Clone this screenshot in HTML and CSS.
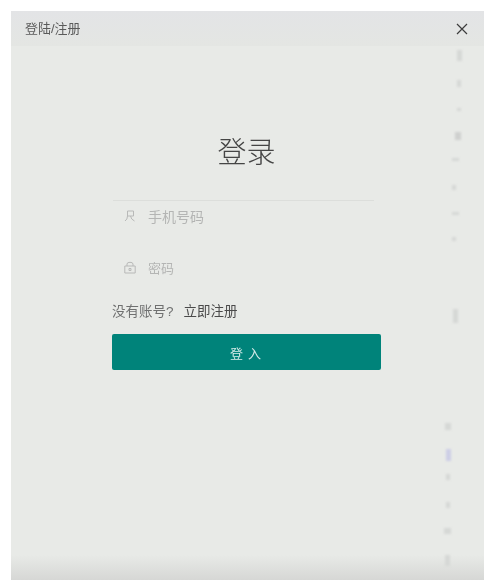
FILE: index.html
```html
<!DOCTYPE html>
<html lang="zh">
<head>
<meta charset="utf-8">
<title>登录</title>
<link rel="stylesheet" href="styles.css">
</head>
<body>
<main class="dialog">
  <header class="dialog-head">
    <span class="dialog-title">登陆/注册</span>
    <svg class="close" viewBox="0 0 12 12" aria-label="关闭"><path d="M1 1 11 11M11 1 1 11"/></svg>
  </header>
  <section class="form">
    <h1 class="heading">登录</h1>
    <div class="field field-first">
      <svg class="field-icon" viewBox="0 0 12 12"><path d="M3.5 1H9.5V6H3.5V1ZM3.5 6Q3.5 9.5 1 11M6.5 6Q7 9.5 10.5 11"/></svg>
      <span class="placeholder">手机号码</span>
    </div>
    <div class="field field-second">
      <svg class="field-icon field-icon-lock" viewBox="0 0 12 12"><path d="M3 4.5V2.5Q3 .8 6 .8T9 2.5V4.5M.8 4.5H11.2V11.5H.8ZM5 7H7V9H5Z"/></svg>
      <span class="placeholder placeholder-short">密码</span>
    </div>
    <p class="signup"><span class="signup-hint">没有账号?</span><a class="signup-link" href="#">立即注册</a></p>
    <button class="submit" type="button">登入</button>
  </section>
  <div class="footer-shade"></div>
  <i class="spot s1"></i><i class="spot s2"></i><i class="spot s3"></i><i class="spot s4"></i>
  <i class="spot s5"></i><i class="spot s6"></i><i class="spot s7"></i><i class="spot s8"></i>
  <i class="spot s9"></i><i class="spot s10"></i><i class="spot s11"></i><i class="spot s12"></i>
  <i class="spot s13"></i><i class="spot s14"></i><i class="spot s15"></i>
</main>
</body>
</html>
```
FILE: styles.css
```css
* { box-sizing: border-box; }
html, body { height: 100%; }
body {
  margin: 0;
  padding: 11px 14px 7px 11px;
  background: #fff;
  font-family: "Liberation Sans", "Noto Sans CJK SC", sans-serif;
}
.dialog {
  position: relative;
  display: flex;
  flex-direction: column;
  height: 569px;
  background: #e8eae7;
  overflow: hidden;
}
.dialog-head {
  flex: none;
  display: flex;
  align-items: center;
  justify-content: space-between;
  height: 35px;
  padding: 0 14px 2px;
  background: linear-gradient(#e3e4e6, #e4e6e3);
}
.dialog-title {
  font-size: 13px;
  color: #5a5a5a;
  filter: blur(0.4px);
}
.close {
  width: 12px;
  height: 12px;
  margin-top: 3px;
  margin-right: 2px;
  fill: none;
  stroke: #3c3c3c;
  stroke-width: 1.2;
}
.form {
  display: flex;
  flex-direction: column;
  padding: 0 103px 0 101px;
}
.heading {
  margin: 0;
  padding-top: 87px;
  font-size: 29px;
  line-height: 40px;
  font-weight: 300;
  text-align: center;
  color: #454545;
  filter: blur(0.3px);
}
.field {
  display: flex;
  align-items: center;
  gap: 12px;
  padding-left: 12px;
  color: #b4b5b4;
}
.field-first {
  height: 36px;
  margin-top: 27px;
  margin-right: 7px;
  margin-left: 1px;
  border-top: 1px solid #dcdedb;
  padding-left: 11px;
  padding-bottom: 5px;
}
.field-second {
  height: 36px;
  margin-top: 13px;
}
.field-icon {
  flex: none;
  width: 12px;
  height: 12px;
  fill: none;
  stroke: #b8b9b8;
  stroke-width: 1;
}
.field-icon-lock { width: 12px; height: 13px; }
.placeholder {
  font-size: 14px;
  filter: blur(0.6px);
}
.placeholder-short { font-size: 13px; }
.signup {
  display: flex;
  gap: 10px;
  margin: 17px 0 0;
  font-size: 13.5px;
  line-height: 20px;
  filter: blur(0.3px);
}
.signup-hint { color: #6f7070; }
.signup-link { color: #4a4a4a; text-decoration: none; }
.submit {
  height: 36px;
  margin-top: 12px;
  padding: 0 0 0 3px;
  border: 0;
  border-radius: 2px;
  background: #00837a;
  color: #d7ecea;
  font-family: inherit;
  font-size: 13px;
  letter-spacing: 5px;
  filter: blur(0.2px);
}
.footer-shade {
  position: absolute;
  left: 0;
  right: 0;
  bottom: 0;
  height: 25px;
  background: linear-gradient(#e8eae7, #d6d7d5);
}
.spot {
  position: absolute;
  width: 4px;
  height: 7px;
  background: #d6d8d6;
  filter: blur(1px);
}
.s1 { left: 446px; top: 39px; width: 5px; height: 11px; }
.s2 { left: 446px; top: 69px; width: 4px; height: 7px; }
.s3 { left: 446px; top: 97px; height: 3px; }
.s4 { left: 444px; top: 121px; width: 6px; height: 8px; background: #cfd0cf; }
.s5 { left: 441px; top: 147px; width: 7px; height: 3px; }
.s6 { left: 441px; top: 174px; height: 5px; }
.s7 { left: 441px; top: 201px; width: 7px; height: 3px; }
.s8 { left: 441px; top: 226px; height: 4px; }
.s9 { left: 442px; top: 298px; width: 5px; height: 14px; }
.s10 { left: 434px; top: 412px; width: 6px; height: 7px; }
.s11 { left: 435px; top: 438px; width: 5px; height: 12px; background: #cdcee6; }
.s12 { left: 435px; top: 463px; height: 6px; }
.s13 { left: 435px; top: 491px; height: 6px; }
.s14 { left: 433px; top: 517px; width: 7px; height: 6px; }
.s15 { left: 434px; top: 544px; width: 5px; height: 11px; }
```
